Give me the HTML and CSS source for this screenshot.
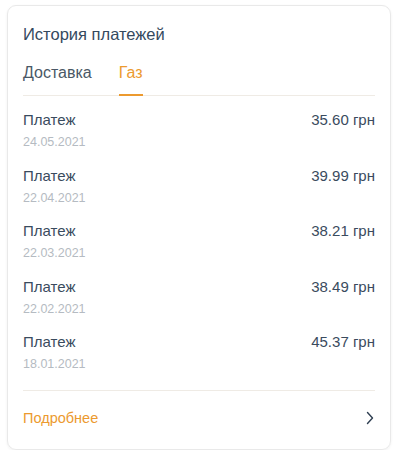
FILE: index.html
```html
<!DOCTYPE html>
<html lang="ru">
<head>
<meta charset="utf-8">
<link rel="stylesheet" href="styles.css">
</head>
<body>
<div class="card">
  <div class="title">История платежей</div>
  <div class="tabs">
    <div class="tab">Доставка</div>
    <div class="tab active">Газ</div>
  </div>
  <div class="list">
    <div class="row"><div class="info"><div class="name">Платеж</div><div class="date">24.05.2021</div></div><div class="amount">35.60 грн</div></div>
    <div class="row"><div class="info"><div class="name">Платеж</div><div class="date">22.04.2021</div></div><div class="amount">39.99 грн</div></div>
    <div class="row"><div class="info"><div class="name">Платеж</div><div class="date">22.03.2021</div></div><div class="amount">38.21 грн</div></div>
    <div class="row"><div class="info"><div class="name">Платеж</div><div class="date">22.02.2021</div></div><div class="amount">38.49 грн</div></div>
    <div class="row"><div class="info"><div class="name">Платеж</div><div class="date">18.01.2021</div></div><div class="amount">45.37 грн</div></div>
  </div>
  <div class="more">
    <span class="more-text">Подробнее</span>
    <svg class="chev" width="8" height="14" viewBox="0 0 8 14"><path d="M1.5 1.5 L6.5 7 L1.5 12.5" fill="none" stroke="#2f3f52" stroke-width="1.4" stroke-linecap="round" stroke-linejoin="round"/></svg>
  </div>
</div>
</body>
</html>
```
FILE: styles.css
```css
html, body { margin: 0; padding: 0; background: #ffffff; }
body { font-family: "Liberation Sans", Arial, sans-serif; }
.card {
  margin: 5px 0 0 7px;
  width: 384px;
  height: 445px;
  box-sizing: border-box;
  border: 1px solid #e9e9e9;
  border-radius: 9px;
  box-shadow: 0 1px 3px rgba(0,0,0,0.06);
  padding: 0 15px;
  display: flex;
  flex-direction: column;
}
.title {
  font-size: 16.5px;
  color: #34495e;
  line-height: 20px;
  margin-top: 18px;
}
.tabs {
  display: flex;
  gap: 27px;
  margin-top: 19px;
  border-bottom: 1px solid #efebe5;
}
.tab {
  font-size: 16px;
  line-height: 20px;
  color: #4a5866;
  padding-bottom: 11px;
  border-bottom: 2px solid transparent;
  margin-bottom: -1px;
}
.tab.active { color: #ec9a2f; border-bottom-color: #ec9a2f; }
.list {
  display: flex;
  flex-direction: column;
  padding-top: 15px;
  padding-bottom: 1px;
  border-bottom: 1px solid #efebe5;
}
.row {
  display: flex;
  justify-content: space-between;
  align-items: flex-start;
  height: 55.5px;
}
.name { font-size: 15px; line-height: 18px; color: #3a4b5e; }
.date { font-size: 12.5px; line-height: 16px; color: #b5bbc2; margin-top: 5px; }
.amount { font-size: 15px; line-height: 18px; color: #3a4b5e; }
.more {
  display: flex;
  justify-content: space-between;
  align-items: center;
  margin-top: 18px;
  padding-right: 1px;
}
.more-text { font-size: 14.5px; line-height: 18px; color: #ec9a2f; }
.chev { display: block; }
```
